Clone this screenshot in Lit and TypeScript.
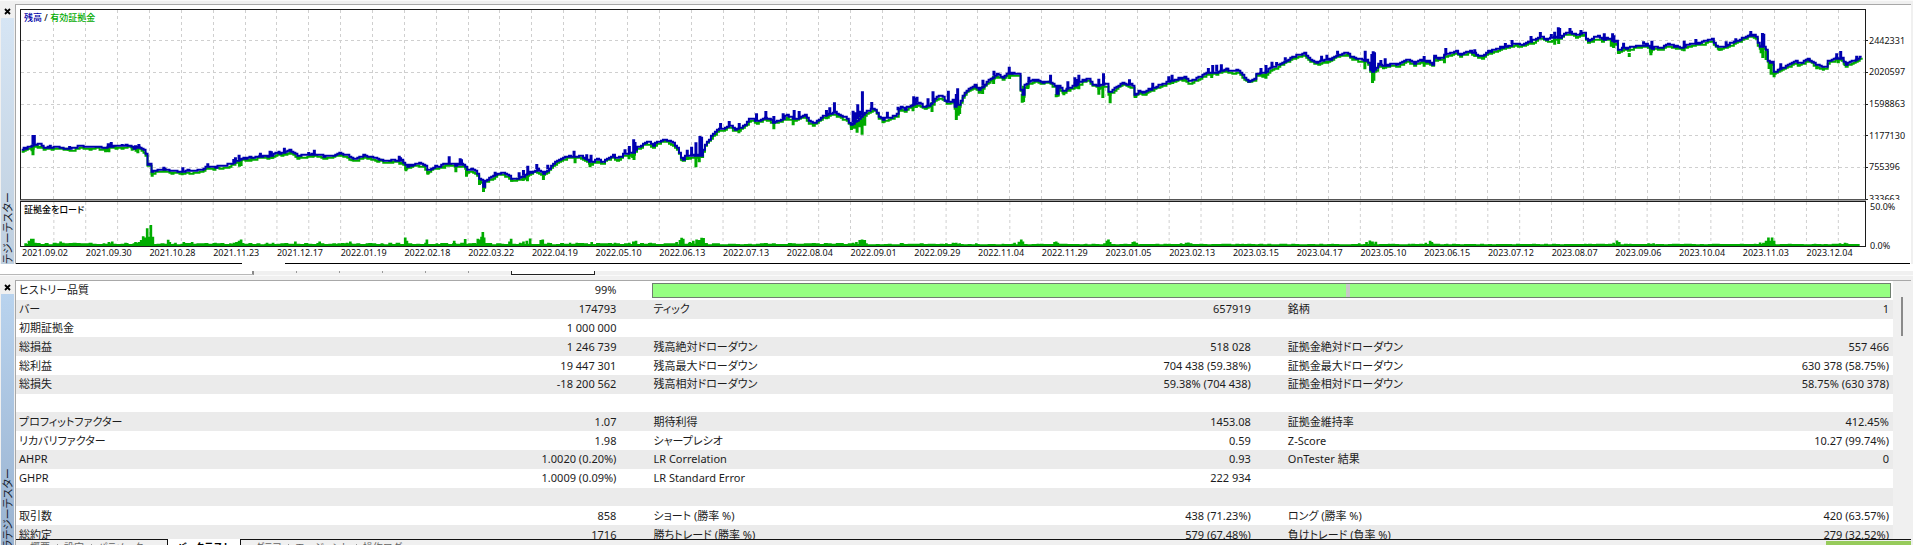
import { LitElement, html, css, svg, nothing } from "lit";
import { customElement, property } from "lit/decorators.js";

type Pt = [number, number];

/* Each chunk of history: start offset, then "x,y" pairs in chart units (3 units = 1px). */
interface Chunk { start: number; base: string; up: string; down: string; load: string; noise: number; }

const CHUNKS: Chunk[] = [
  {
    start: 0, noise: 5,
    base: "63,447 80,440 95,434 100,430 117,431 130,438 150,439 165,436 180,440 205,444 225,440 250,434 265,440 285,435 300,440 315,440 340,434 360,437 385,434 400,442 415,440 430,450 437,465 441,490 450,490 453,515 465,510 480,508 490,504 505,512 520,510 540,515 555,510 580,512 600,505 625,498 650,498 670,495 690,490 700,485 722,472 740,472 760,470 775,465 800,465 812,468 820,458 850,455 865,448 880,456 890,465 905,462 925,460 940,460 960,462 975,468 1000,462 1015,458 1035,462 1055,474 1075,470 1090,464 1110,468 1130,474 1145,477 1160,480 1185,478 1205,480 1217,498 1235,492 1255,488 1272,492 1283,512 1295,500 1315,495 1345,487 1365,492 1390,490 1400,508 1415,505 1430,517 1438,535",
    up: "97,403 101,403 149,432 207,436 323,428 332,424 328,430 365,430 405,434 415,430 490,498 547,500 622,488 700,475 705,470 716,462 780,456 809,450 813,452 836,450 852,441 925,454 942,447 1197,465 1201,470 1347,467 1380,473 1384,476",
    down: "94,452 97,464 203,450 315,455 320,454 325,455 395,450 412,458 455,528 545,524 717,498 722,496 815,474 890,472 940,470 975,474 1055,482 1217,512 1283,522 1367,515 1399,528 1438,553",
    load: "75,730 85,722 92,716 98,716 180,724 185,728 215,730 310,730 325,726 335,724 375,728 405,726 415,726 422,720 428,708 434,712 440,684 446,710 451,674 457,710 503,719 508,726 525,728 550,726 575,726 645,728 690,730 708,726 716,722 722,718 800,728 818,728 885,724 915,730 958,724 1015,730 1040,728 1050,724 1100,730 1145,730 1190,728 1215,712 1220,722 1280,718 1310,730 1362,722 1395,717 1410,730 1433,716 1437,718",
  },
  {
    start: 1440, noise: 4,
    base: "0,537 6,540 8,562 12,540 30,530 50,520 70,514 80,522 95,535 115,530 130,525 150,515 170,505 190,520 200,510 215,492 240,474 265,465 280,468 300,465 320,478 330,485 350,475 365,484 385,470 400,463 410,475 430,460 460,455 470,440 490,428 510,422 515,434 535,422 555,414 575,425 590,437 597,455 607,478 615,465 665,462 672,435 690,410 710,388 730,382 750,374 765,385 785,380 800,365 810,350 830,362 850,352 865,350 880,365 900,358 920,345 945,355 975,342 985,360 1000,368 1020,352 1045,340 1065,335 1085,346 1100,352 1113,372 1140,350 1160,332 1175,324 1188,326 1195,345 1210,356 1230,350 1250,342 1260,315 1275,325 1295,312 1315,305 1330,318 1350,312 1365,295 1375,285 1390,290 1400,303 1420,298 1425,315 1438,312",
    up: "45,513 117,515 130,508 143,495 170,490 203,492 282,450 320,461 333,462 435,446 448,436 461,416 465,424 622,447 635,438 648,425 660,406 665,408 722,367 748,361 778,367 830,338 858,331 882,346 910,338 943,328 958,331 1040,328 1050,320 1064,305 1120,330 1127,335 1134,311 1141,330 1148,272 1176,304 1223,333 1255,318 1302,287 1307,292 1312,288 1345,293 1360,272 1406,270 1434,263 1430,280",
    down: "10,574 95,543 130,540 142,542 190,538 285,488 330,500 365,490 447,476 462,478 458,472 607,482 622,478 648,500 658,485 668,472 777,398 882,386 940,374 1040,356 1115,388 1124,384 1132,396 1140,380 1147,402 1155,375 1210,368 1300,332 1310,322 1340,326 1357,334 1430,358 1436,345",
    load: "4,710 8,695 12,712 60,730 88,724 93,716 120,728 130,724 140,722 150,715 182,720 188,718 205,728 270,728 290,728 310,730 335,726 360,730 405,728 448,728 460,724 468,722 512,728 555,730 590,726 600,720 605,713 610,716 630,726 640,722 650,718 658,720 665,713 671,714 760,732 850,731 960,732 1010,731 1075,732 1110,730 1120,728 1130,726 1140,720 1147,718 1155,720 1270,731 1360,732 1400,730 1420,728 1430,728",
  },
  {
    start: 2880, noise: 2,
    base: "0,310 5,290 20,268 45,252 57,268 70,255 90,235 110,220 130,230 145,215 165,218 180,222 184,280 190,280 192,255 215,240 235,235 245,245 270,240 286,255 288,280 293,280 295,255 310,272 325,262 350,252 365,240 385,235 400,250 415,258 430,252 445,250 448,290 452,272 470,258 490,245 510,252 520,255 526,288 535,270 555,275 570,265 590,258 620,245 650,235 675,230 690,244 705,235 730,220 750,215 780,212 800,205 815,212 835,208 850,225 868,242 885,235 890,220 915,218 935,200 960,190 975,182 995,170 1020,162 1035,157 1050,175 1070,185 1085,180 1110,175 1135,162 1160,155 1175,168 1200,175 1225,180 1235,212 1250,205 1255,190 1275,195 1300,188 1310,192 1340,178 1355,180 1365,186 1385,178 1410,182 1418,188",
    up: "70,237 103,210 149,198 208,228 273,222 325,242 346,230 352,235 358,222 418,234 432,218 510,236 580,246 628,227 638,222 747,202 760,193 772,192 786,191 803,201 905,202 920,193 938,183 952,184 978,170 1087,165 1103,162 1135,150 1218,150 1238,160 1242,152 1246,155 1265,178 1278,173 1395,166",
    down: "0,340 69,280 102,250 150,235 188,306 192,304 205,265 290,290 296,285 313,284 350,264 358,266 418,282 430,292 452,308 528,292 560,284 640,250 757,232 868,246 920,234 1217,206 1240,247 1244,240 1273,206 1395,198 1417,192",
    load: "0,730 50,730 130,731 165,728 178,725 185,718 190,724 235,731 285,726 290,724 295,728 380,731 435,730 442,722 447,718 452,726 520,726 525,724 532,728 630,731 665,730 680,728 687,727 695,730 790,731 850,731 900,732 1120,731 1200,730 1222,726 1232,721 1240,724 1250,725 1290,731 1350,731 1400,728 1413,722 1418,726",
  },
  {
    start: 4299, noise: 2,
    base: "0,190 2,165 15,172 30,170 45,158 75,152 82,162 110,150 130,160 150,166 168,152 190,145 215,138 240,130 255,128 265,134 285,125 305,118 325,108 345,116 360,112 385,108 400,95 425,98 430,105 445,98 460,100 463,122 480,113 495,106 510,115 530,110 545,122 555,122 558,150 575,140 588,142 591,165 594,140 600,138 620,135 645,130 655,145 670,138 685,142 710,130 730,137 750,140 765,132 790,128 805,125 825,120 840,116 860,142 880,135 905,125 925,115 940,108 955,102 970,104 975,120 985,142 1000,135 1008,180 1020,185 1025,215 1045,205 1065,195 1090,182 1102,188 1128,175 1150,190 1160,196 1175,200 1185,195 1188,182 1210,172 1230,172 1242,190 1258,182 1275,175 1292,166",
    up: "41,142 128,146 220,127 240,118 297,106 325,94 358,100 368,93 379,80 383,82 414,82 447,88 517,98 542,98 546,104 575,126 635,122 660,120 757,120 792,115 883,122 912,113 957,91 992,97 996,99 1047,188 1215,158 1227,151 1275,165",
    down: "22,180 37,188 130,168 275,135 368,132 380,130 538,138 545,142 560,160 592,169 657,164 757,152 862,150 988,158 993,172 1003,178 1012,205 1018,222 1027,230 1155,206 1175,210 1220,188 1240,196 1275,184",
    load: "0,728 10,732 45,731 80,732 170,733 262,732 370,732 460,731 515,731 545,728 555,721 562,726 595,731 650,730 665,730 730,733 860,731 920,732 970,731 985,727 995,728 1003,722 1010,712 1016,722 1021,712 1027,722 1100,733 1150,731 1165,732 1225,730 1240,728 1246,730 1278,732",
  },
];

const LEFT = 61;
const SPAN = 5538;

const parse = (text: string, start: number): Pt[] =>
  text.split(" ").map((pair) => {
    const [x, y] = pair.split(",").map(Number);
    return [x + start, y] as Pt;
  });

const collect = (key: "base" | "up" | "down" | "load"): Pt[] =>
  CHUNKS.flatMap((c) => parse(c[key], c.start));

const noiseAt = (i: number) => {
  const v = Math.sin(i * 12.9898) * 43758.5453;
  return v - Math.floor(v);
};

const BASE = collect("base");

const valueAt = (x: number): number => {
  let i = 1;
  while (i < BASE.length - 1 && BASE[i][0] < x) i++;
  const [x0, y0] = BASE[i - 1];
  const [x1, y1] = BASE[i];
  const t = Math.min(1, Math.max(0, (x - x0) / (x1 - x0 || 1)));
  return y0 + (y1 - y0) * t;
};

const walk = (shift: number, wobble: number): string => {
  const end = BASE[BASE.length - 1][0];
  let d = `M${BASE[0][0]} ${BASE[0][1] + shift}`;
  for (let x = BASE[0][0] + 6, i = 0; x <= end; x += 6, i++) {
    const y = Math.round((valueAt(x) + shift + (noiseAt(i + shift) - 0.5) * wobble) / 3) * 3;
    d += `H${x}V${y}`;
  }
  return d;
};

const spikes = (pts: Pt[]): string =>
  pts.map(([x, y]) => `M${x} ${Math.round(valueAt(x))}V${y}`).join("");

const loadPath = (): string => {
  let d = "";
  for (const c of CHUNKS) {
    for (let x = 0; x < 1440; x += 12) {
      const gx = c.start + x;
      if (gx < 66 || gx > LEFT + SPAN - 24) continue;
      const h = 3 + Math.round(noiseAt(gx) * c.noise);
      d += `M${gx} 740V${736 - h}h12V740Z`;
    }
  }
  for (const [x, y] of collect("load")) d += `M${x - 4} 740V${y}h8V740Z`;
  return d;
};

const GRID_X = Array.from({ length: 57 }, (_, i) => 64 + (i + 1) * 95.7);
const GRID_Y = [120, 215, 310, 405, 499];

const DATES = [
  "2021.09.02", "2021.09.30", "2021.10.28", "2021.11.23", "2021.12.17", "2022.01.19",
  "2022.02.18", "2022.03.22", "2022.04.19", "2022.05.10", "2022.06.13", "2022.07.13",
  "2022.08.04", "2022.09.01", "2022.09.29", "2022.11.04", "2022.11.29", "2023.01.05",
  "2023.02.13", "2023.03.15", "2023.04.17", "2023.05.10", "2023.06.15", "2023.07.12",
  "2023.08.07", "2023.09.06", "2023.10.04", "2023.11.03", "2023.12.04",
];
const LEVELS = ["2442331", "2020597", "1598863", "1177130", "755396", "333663"];

const ROWS: string[][] = [
  ["バー", "174793", "ティック", "657919", "銘柄", "1"],
  ["初期証拠金", "1 000 000", "", "", "", ""],
  ["総損益", "1 246 739", "残高絶対ドローダウン", "518 028", "証拠金絶対ドローダウン", "557 466"],
  ["総利益", "19 447 301", "残高最大ドローダウン", "704 438 (59.38%)", "証拠金最大ドローダウン", "630 378 (58.75%)"],
  ["総損失", "-18 200 562", "残高相対ドローダウン", "59.38% (704 438)", "証拠金相対ドローダウン", "58.75% (630 378)"],
  ["", "", "", "", "", ""],
  ["プロフィットファクター", "1.07", "期待利得", "1453.08", "証拠金維持率", "412.45%"],
  ["リカバリファクター", "1.98", "シャープレシオ", "0.59", "Z-Score", "10.27 (99.74%)"],
  ["AHPR", "1.0020 (0.20%)", "LR Correlation", "0.93", "OnTester 結果", "0"],
  ["GHPR", "1.0009 (0.09%)", "LR Standard Error", "222 934", "", ""],
  ["", "", "", "", "", ""],
  ["取引数", "858", "ショート (勝率 %)", "438 (71.23%)", "ロング (勝率 %)", "420 (63.57%)"],
  ["総約定", "1716", "勝ちトレード (勝率 %)", "579 (67.48%)", "負けトレード (負率 %)", "279 (32.52%)"],
];

@customElement("side-caption")
export class SideCaption extends LitElement {
  @property() tone = "light";

  static styles = css`
    :host { display: flex; flex-direction: column; flex: 0 0 15px; min-height: 0; overflow: hidden; background: #f0f0f0; }
    .close { display: grid; place-items: center; flex: 0 0 14px; width: 14px; margin: 0; padding: 0; border: 0; background: none; }
    .bar { flex: 1 1 0; min-height: 0; overflow: hidden; margin: 0 1px; padding-top: 174px; }
    .light { background: linear-gradient(#d6e5f4, #bfcfdf); }
    .strong { background: linear-gradient(#b9d3ee, #9ab3d0); }
    .name {
      writing-mode: vertical-rl; text-orientation: sideways; transform: rotate(180deg);
      font: 11px/13px "Noto Sans CJK JP", sans-serif; font-feature-settings: "palt"; color: #1a2430; white-space: nowrap;
    }
  `;

  render() {
    return html`
      <button class="close" aria-label="閉じる">
        <svg width="7" height="7" viewBox="0 0 7 7"><path d="M1 1L6 6M6 1L1 6" stroke="#000" stroke-width="1.8" /></svg>
      </button>
      <div class="bar ${this.tone}"><div class="name">ストラテジーテスター</div></div>
    `;
  }
}

@customElement("equity-chart")
export class EquityChart extends LitElement {
  static styles = css`
    :host { display: block; background: #fff; font: 9px/12px "Noto Sans", "Noto Sans CJK JP", sans-serif; color: #111; }
    .frame { display: grid; grid-template-columns: minmax(0, 1fr) 45px; padding: 4px 0 0 4px; }
    .plot { display: grid; grid-template-columns: minmax(0, 1fr); border: 1px solid #1c1c1c; box-sizing: border-box; }
    .plot > * { grid-area: 1 / 1; }
    .equity { height: 191px; border-bottom-color: #555; }
    .load { height: 46px; margin-top: 1px; }
    .seam { box-shadow: 0 1px 0 #a0a0a0; }
    svg { display: block; width: 100%; height: 100%; min-height: 0; }
    .grid { stroke: #cfcfcf; stroke-width: 1; stroke-dasharray: 3 3; shape-rendering: crispEdges; }
    .grid, .line, .spike { fill: none; vector-effect: non-scaling-stroke; }
    .line { stroke-width: 2; }
    .spike { stroke-width: 3; }
    .green { stroke: #0a0; }
    .blue { stroke: #0000b0; }
    .area { fill: #00ad00; }
    .legend { z-index: 1; margin: 0; padding: 2px 0 0 3px; font-weight: 500; font-feature-settings: "palt"; }
    .balance { color: #0000a8; }
    .funds { color: #0a0; }
    .title { color: #000; }
    .scale { height: 191px; overflow: hidden; padding-top: 16px; box-sizing: border-box; }
    .levels { display: grid; grid-template-rows: repeat(6, 1fr); height: 190px; }
    .levels span { display: flex; align-items: center; gap: 1px; }
    .levels span::before { content: ""; width: 2px; height: 1px; background: #222; }
    .percent { display: flex; flex-direction: column; justify-content: space-between; height: 51px; margin: 1px 0 -5px 0; padding-left: 4px; }
    .dates { display: flex; height: 16px; padding-left: 2px; box-sizing: border-box; }
    .date { flex: 0 0 calc(100% / 28.93); white-space: nowrap; }
    .rule { display: flex; gap: 43px; margin-right: 1px; }
    .rule span { display: block; height: 1px; background: #000; }
    .rule .short { flex: 0 0 226px; }
    .rule .long { flex: 1 1 0; }
  `;

  render() {
    const up = spikes(collect("up"));
    const down = spikes(collect("down"));
    return html`
      <div class="frame">
        <div class="plot equity seam">
          <svg viewBox="${LEFT} 28 ${SPAN} 567" preserveAspectRatio="none" aria-label="残高 / 有効証拠金">
            ${GRID_X.map((x) => svg`<path class="grid" d="M${x} 28V595" />`)}
            ${GRID_Y.map((y) => svg`<path class="grid" d="M${LEFT} ${y}H${LEFT + SPAN}" />`)}
            <path class="line green" d=${walk(6, 6)} />
            <path class="spike green" d=${down} />
            <path class="line blue" d=${walk(0, 5)} />
            <path class="spike blue" d=${up} />
          </svg>
          <p class="legend"><span class="balance">残高</span> / <span class="funds">有効証拠金</span></p>
        </div>
        <div class="scale"><div class="levels">${LEVELS.map((v) => html`<span>${v}</span>`)}</div></div>
        <div class="plot load">
          <svg viewBox="${LEFT} 604 ${SPAN} 134" preserveAspectRatio="none" aria-label="証拠金をロード">
            ${GRID_X.map((x) => svg`<path class="grid" d="M${x} 604V738" />`)}
            <path class="area" d=${loadPath()} />
          </svg>
          <p class="legend title">証拠金をロード</p>
        </div>
        <div class="percent"><span>50.0%</span><span>0.0%</span></div>
        <div class="dates">${DATES.map((d) => html`<span class="date">${d}</span>`)}</div>
      </div>
      <div class="rule"><span class="short"></span><span class="long"></span></div>
    `;
  }
}

@customElement("report-table")
export class ReportTable extends LitElement {
  static styles = css`
    :host { display: flex; min-height: 0; overflow: hidden; background: #fff; }
    table { flex: 1 1 0; height: 263px; border-collapse: collapse; table-layout: fixed; font: 11px/16px "Noto Sans", "Noto Sans CJK JP", sans-serif; color: #1c1c1c; }
    .w-label { width: 15%; }
    .w-value { width: 18.8%; }
    th, td { height: 18px; padding: 0; font-weight: 400; white-space: nowrap; vertical-align: middle; }
    th { padding-left: 3px; text-align: left; font-feature-settings: "palt"; }
    td { padding-right: 34px; text-align: right; }
    td:last-child { padding-right: 4px; }
    tr:nth-child(even) { background: #ebebeb; }
    td.quality:last-child { padding: 0 2px 0 2px; }
    .meter { display: flex; height: 13px; border: 1px solid #6f7f6f; background: #96ff82; }
    .before { flex: 0 0 56%; }
    .gap { flex: 0 0 4px; background: #c8c8c8; }
    .scroll { box-sizing: border-box; flex: 0 0 18px; background: #f0f0f0; padding: 16px 8px 0 8px; }
    .thumb { width: 2px; height: 39px; background: #8a8a8a; }
  `;

  render() {
    return html`
      <table>
        <colgroup>
          <col class="w-label" /><col class="w-value" /><col class="w-label" /><col class="w-value" /><col class="w-label" /><col />
        </colgroup>
        <tbody>
          <tr>
            <th scope="row">ヒストリー品質</th>
            <td>99%</td>
            <td class="quality" colspan="4">
              <div class="meter"><span class="before"></span><span class="gap"></span></div>
            </td>
          </tr>
          ${ROWS.map((r) => html`<tr>${[0, 2, 4].map((i) => html`<th scope=${r[i] ? "row" : nothing}>${r[i]}</th><td>${r[i + 1]}</td>`)}</tr>`)}
        </tbody>
      </table>
      <div class="scroll"><div class="thumb"></div></div>
    `;
  }
}

@customElement("app-root")
export class AppRoot extends LitElement {
  static styles = css`
    :host { display: flex; flex-direction: column; height: 100vh; overflow: hidden; background: #f0f0f0; }
    .top { display: flex; border-top: 1px solid #fafafa; padding-top: 3px; padding-right: 2px; }
    .top equity-chart { flex: 1 1 0; min-width: 0; border-top: 1px solid #a8a8a8; border-left: 1px solid #a8a8a8; }
    .band { border-top: 7px solid #fff; padding-bottom: 4px; }
    .strip { display: flex; align-items: flex-start; height: 4px; border-bottom: 1px solid #fafafa; }
    .sheet { width: 252px; height: 3px; background: #fff; border-right: 2px solid #8a8a8a; border-bottom: 1px solid #b8b8b8; }
    .ticks { display: flex; flex: 0 0 257px; justify-content: space-evenly; }
    .ticks i { width: 1px; height: 2px; background: #9a9a9a; }
    .active { width: 82px; height: 3px; background: #fff; border: 1px solid #222; border-top: 0; }
    .bottom { display: flex; flex: 1 1 0; min-height: 0; padding-right: 2px; }
    .pane { display: flex; flex-direction: column; flex: 1 1 0; min-width: 0; border-top: 1px solid #a8a8a8; border-left: 1px solid #a8a8a8; }
    report-table { flex: 1 1 0; }
    .tabs { display: flex; flex: 0 0 6px; overflow: hidden; }
    .group { display: flex; border-top: 1px solid #111; }
    .group.lead { width: 152px; border-right: 1px solid #111; }
    .group.rest { flex: 1; border-left: 1px solid #111; }
    button { display: block; margin: 0; padding: 1px 7px 0 7px; border: 0; background: none; font: 10px/12px "Noto Sans CJK JP", sans-serif; font-feature-settings: "palt"; color: #666; white-space: nowrap; }
    .group button + button { background: linear-gradient(#999, #999) 0 4px / 1px 8px no-repeat; }
    .group.lead, .group.rest { box-sizing: border-box; padding-left: 7px; }
    .current { width: 72px; padding: 2px 0 0 0; background: #fff; color: #000; font-weight: 700; }
    .status { width: 85px; height: 6px; margin: 1px 0 0 auto; background: #97cb5b; }
  `;

  render() {
    return html`
      <section class="top">
        <side-caption tone="light"></side-caption>
        <equity-chart></equity-chart>
      </section>
      <div class="band">
        <div class="strip">
          <span class="sheet"></span>
          <span class="ticks"><i></i><i></i><i></i><i></i><i></i></span>
          <span class="active"></span>
        </div>
      </div>
      <section class="bottom">
        <side-caption tone="strong"></side-caption>
        <div class="pane">
          <report-table></report-table>
          <nav class="tabs">
            <div class="group lead"><button>概要</button><button>設定</button><button>パラメータ</button></div>
            <button class="current">バックテスト</button>
            <div class="group rest">
              <button>グラフ</button><button>エージェント</button><button>操作ログ</button>
              <span class="status"></span>
            </div>
          </nav>
        </div>
      </section>
    `;
  }
}
